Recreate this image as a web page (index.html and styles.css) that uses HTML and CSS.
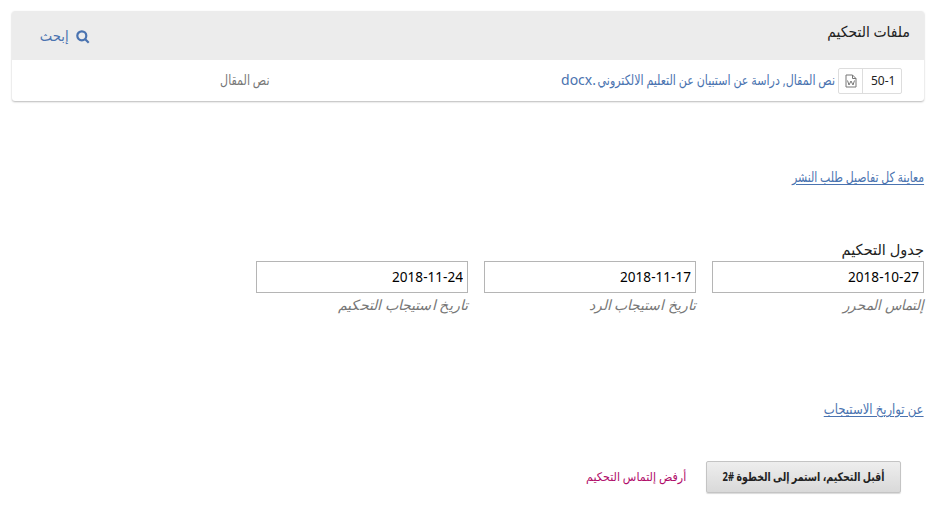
FILE: index.html
```
<!DOCTYPE html>
<html lang="ar" dir="rtl">
<head>
<meta charset="utf-8">
<title>ملفات التحكيم</title>
<link rel="stylesheet" href="styles.css">
</head>
<body>
<section class="files">
  <header class="files-head">
    <h4>ملفات التحكيم</h4>
    <a class="search" href="#"><svg viewBox="0 0 14 14" width="14" height="14"><circle cx="5.8" cy="5.8" r="4.500"/><path d="M9 9L12.700 12.700"/></svg><span>إبحث</span></a>
  </header>
  <div class="row">
    <span class="badge"><span class="id" dir="ltr">50-1</span><span class="icon"><svg viewBox="0 0 12 14" width="12" height="14"><path d="M1 1h6.500L11 4.500V13H1zM7.500 1v3.500H11M2.500 6.500l1.500 4.500L6 7l2 4 1.500-4.500"/></svg></span></span>
    <a class="file" href="#"><span class="file-name">نص المقال, دراسة عن استبيان عن التعليم الالكتروني</span><span class="ext" dir="ltr"><span>docx</span><span>.</span></span></a>
    <span class="kind">نص المقال</span>
  </div>
</section>
<a class="details link" href="#">معاينة كل تفاصيل طلب النشر</a>
<h3>جدول التحكيم</h3>
<div class="dates">
  <label><input type="text" value="2018-10-27"><span class="editor">إلتماس المحرر</span></label>
  <label><input type="text" value="2018-11-17"><span>تاريخ استيجاب الرد</span></label>
  <label><input type="text" value="2018-11-24"><span class="due">تاريخ استيجاب التحكيم</span></label>
</div>
<a class="about link" href="#">عن تواريخ الاستيجاب</a>
<div class="actions"><button><span>أقبل التحكيم، استمر إلى الخطوة #2</span></button><a href="#">أرفض إلتماس التحكيم</a></div>
</body>
</html>
```
FILE: styles.css
```
* { box-sizing: border-box; }
body { margin: 0; padding: 11px 18px 0 12px; height: 525px; overflow: hidden; background: #fff; color: #222; font: 14px/20px "Noto Sans", "DejaVu Sans", sans-serif; }
a { color: #4a73b0; text-decoration: none; }
.link { display: block; width: max-content; text-decoration: underline; text-underline-offset: 2px; transform-origin: right; }
.files { height: 90px; border-radius: 3px; box-shadow: 0 1px 2px rgba(0,0,0,.28); }
.files-head { height: 49px; background: #ececec; border-radius: 3px 3px 0 0; display: flex; justify-content: space-between; padding: 10px 14px 0 26px; }
h4, h3 { margin: 0; width: max-content; font-size: 15px; font-weight: 500; line-height: 20px; transform-origin: right; }
h4 { transform: scaleX(.93); }
h3 { margin-top: 52px; transform: scaleX(.97); }
.search { display: flex; gap: 7px; padding-top: 5px; }
.search span { transform: scaleX(.94); transform-origin: right; }
svg { fill: none; stroke: currentColor; }
.search svg { stroke-width: 2.2; margin-top: 4px; }
.row { display: flex; padding: 8px 22px 0 0; height: 41px; }
.badge { display: flex; width: 64px; height: 26px; border: 1px solid #ddd; border-radius: 2px; font-size: 12px; line-height: 24px; }
.id { width: 38px; padding-left: 8px; text-align: left; }
.icon { flex: 1; border-right: 1px solid #ddd; color: #777; display: grid; place-items: center; }
.file { display: flex; width: 569px; padding: 2px 3px 0 0; white-space: nowrap; }
.file-name { width: 239px; transform: scaleX(.79); transform-origin: right; }
.kind { color: #777; padding-top: 2px; transform: scaleX(.79); transform-origin: right; }
.details { margin-top: 66px; transform: scaleX(.777); }
.dates { display: flex; gap: 16px; margin-top: 2px; }
label { width: 212px; }
input { display: block; width: 212px; height: 32px; border: 1px solid #b5b5b5; padding: 0 4px 2px; color: #000; font: 13.6px "Noto Sans", sans-serif; }
label span { display: block; color: #777; font-style: italic; margin-top: 2px; transform-origin: right; }
.editor { transform: scaleX(.96); }
.due { transform: scaleX(1.02); }
.about { margin-top: 84px; transform: scaleX(.835); }
.actions { display: flex; align-items: center; gap: 20px; padding-right: 23px; margin-top: 42px; font-size: 12px; }
button { width: 195px; height: 32px; flex: none; padding: 0 16px 2px; border: 1px solid #c4c4c4; border-radius: 2px; background: linear-gradient(#eee, #d9d9d9); box-shadow: 0 1px 1px rgba(0,0,0,.15); color: #222; font: bold 12px "Noto Sans", "DejaVu Sans", sans-serif; text-align: right; white-space: nowrap; }
button span { display: block; width: max-content; transform: scaleX(.784); transform-origin: right; }
.actions a { color: #b00b69; transform: scaleX(.925); transform-origin: right; }
```
